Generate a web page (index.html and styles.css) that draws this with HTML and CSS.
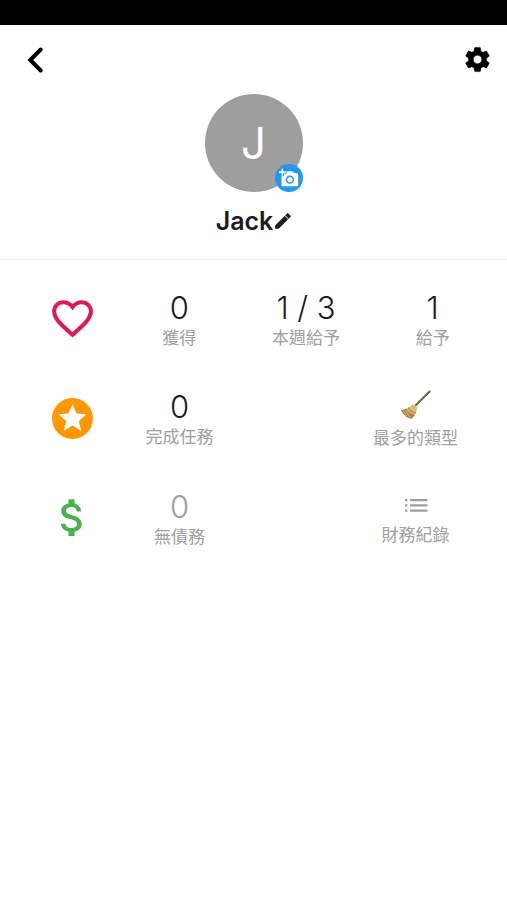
FILE: index.html
```html
<!DOCTYPE html>
<html lang="zh-Hant">
<head>
    <meta charset="UTF-8">
    <title>Jack</title>
    <link rel="stylesheet" href="styles.css">
</head>

<body>

<div class="status-bar"></div>

<div class="toolbar">
    <svg class="back" viewBox="0 0 20 28"><path d="M15.7 3.5L5.300 14l10.400 10.500"/></svg>
    <svg class="gear" viewBox="0 0 24 24"><path d="M19.43 12.98c.04-.32.07-.64.07-.98s-.03-.66-.07-.98l2.11-1.65c.19-.15.24-.42.12-.64l-2-3.46c-.12-.22-.39-.3-.61-.22l-2.49 1c-.52-.4-1.08-.73-1.69-.98l-.38-2.65C14.46 2.18 14.25 2 14 2h-4c-.25 0-.46.18-.49.42l-.38 2.65c-.61.25-1.17.59-1.69.98l-2.49-1c-.23-.09-.49 0-.61.22l-2 3.46c-.13.22-.07.49.12.64l2.11 1.65c-.04.32-.07.65-.07.98s.03.66.07.98l-2.11 1.65c-.19.15-.24.42-.12.64l2 3.46c.12.22.39.3.61.22l2.49-1c.52.4 1.08.73 1.69.98l.38 2.65c.03.24.24.42.49.42h4c.25 0 .46-.18.49-.42l.38-2.65c.61-.25 1.17-.59 1.69-.98l2.49 1c.23.09.49 0 .61-.22l2-3.46c.12-.22.07-.49-.12-.64l-2.11-1.65zM12 15.5c-1.93 0-3.5-1.57-3.5-3.5s1.57-3.5 3.5-3.5 3.5 1.57 3.5 3.5-1.57 3.5-3.5 3.5z"/></svg>
</div>

<div class="profile">
    <div class="avatar">
        <span>J</span>
        <div class="camera">
            <svg viewBox="0 0 24 24"><path d="M3 4V1h2v3h3v2H5v3H3V6H0V4h3zm3 6V7h3V4h7l1.83 2H21c1.1 0 2 .9 2 2v12c0 1.1-.9 2-2 2H5c-1.1 0-2-.9-2-2V10h3zm7 9c2.76 0 5-2.24 5-5s-2.24-5-5-5-5 2.24-5 5 2.24 5 5 5zm-3.2-5c0 1.77 1.43 3.2 3.2 3.2s3.2-1.43 3.2-3.2-1.43-3.2-3.2-3.2-3.2 1.43-3.2 3.2z"/></svg>
        </div>
    </div>
    <div class="name">
        <span>Jack</span>
        <svg viewBox="0 0 24 24"><path d="M3 17.25V21h3.75L17.81 9.94l-3.75-3.75L3 17.25zM20.71 7.04c.39-.39.39-1.02 0-1.41l-2.34-2.34c-.39-.39-1.02-.39-1.41 0l-1.83 1.83 3.75 3.75 1.83-1.83z"/></svg>
    </div>
</div>

<div class="stats">
    <div class="row">
        <svg class="icon heart" viewBox="0 0 24 24"><path d="M12 20C6 14.600 3 12 3 8.500 3 6 5 4 7.500 4 9.300 4 10.900 4.900 12 6.400 13.100 4.900 14.700 4 16.500 4 19 4 21 6 21 8.500 21 12 18 14.600 12 20z"/></svg>
        <div class="stat">
            <div class="value">0</div>
            <div class="label">獲得</div>
        </div>
        <div class="stat">
            <div class="value">1 / 3</div>
            <div class="label">本週給予</div>
        </div>
        <div class="stat">
            <div class="value">1</div>
            <div class="label">給予</div>
        </div>
    </div>

    <div class="row">
        <svg class="icon star" viewBox="0 0 24 24"><path d="M11.99 2C6.47 2 2 6.48 2 12s4.47 10 9.99 10C17.52 22 22 17.52 22 12S17.52 2 11.99 2zm4.24 16L12 15.45 7.77 18l1.12-4.81-3.73-3.23 4.92-.42L12 5l1.92 4.53 4.92.42-3.73 3.23L16.23 18z"/></svg>
        <div class="stat">
            <div class="value">0</div>
            <div class="label">完成任務</div>
        </div>
        <div class="stat wide broom">
            <svg viewBox="0 0 32 32">
                <path class="stick" d="M30.500 1.500L15.500 16.500"/>
                <path class="stick-light" d="M29.600 1.900L15 16.400"/>
                <path class="brush" d="M13 15c2-.8 5.200 2.300 4.500 4.700-.4 4.300-2.700 7.500-5.500 10.100C7 28.800 3 25.500 1.200 21c4.200-.8 8.600-2.500 11.800-6z"/>
                <path class="shade" d="M2.200 23c2 3.500 5.500 6 9.500 6.800 1.400-1.200 2.500-2.500 3.400-4C10 25.500 8 23.500 6 19.500L1.200 21z"/>
                <path class="band" d="M8.500 18c1.500 3 4 5 7.700 5.600M6 19.400c1.600 3.500 4.400 5.700 8.900 6.400"/>
                <path class="straw" d="M3 21.500l4 5M5.500 21l4.500 7M11.500 17.500l2 4"/>
            </svg>
            <div class="label">最多的類型</div>
        </div>
    </div>

    <div class="row muted">
        <svg class="icon dollar" viewBox="0 0 24 24"><path d="M11.8 10.9c-2.27-.59-3-1.2-3-2.15 0-1.09 1.01-1.85 2.7-1.85 1.78 0 2.44.85 2.5 2.1h2.21c-.07-1.72-1.12-3.3-3.21-3.81V3h-3v2.16c-1.94.42-3.5 1.68-3.5 3.61 0 2.31 1.91 3.46 4.7 4.13 2.5.6 3 1.48 3 2.41 0 .69-.49 1.79-2.7 1.79-2.06 0-2.87-.92-2.98-2.1h-2.2c.12 2.19 1.76 3.42 3.68 3.83V21h3v-2.15c1.95-.37 3.5-1.5 3.5-3.55 0-2.84-2.43-3.81-4.7-4.4z"/></svg>
        <div class="stat">
            <div class="value">0</div>
            <div class="label">無債務</div>
        </div>
        <div class="stat wide records">
            <svg viewBox="0 0 24 16"><path d="M1 1h2.400v2.200H1zM6 1h17.500v2.200H6zM1 6.300h2.400v2.200H1zM6 6.300h17.500v2.200H6zM1 11.600h2.400v2.200H1zM6 11.600h17.500v2.200H6z"/></svg>
            <div class="label">財務紀錄</div>
        </div>
    </div>
</div>

</body>
</html>
```
FILE: styles.css
```css
body {
    margin: 0;
    background-color: #ffffff;
    color: #1c1c1c;
    font-family: Inter, "Noto Sans CJK TC", sans-serif;
}

svg {
    display: block;
    flex: none;
}

.status-bar {
    height: 25px;
    background-color: #000000;
}

.toolbar {
    display: flex;
    justify-content: space-between;
    align-items: center;
    height: 69px;
    padding: 0 15px 0 25px;
}

.back {
    width: 20px;
    height: 28px;
    fill: none;
    stroke: #000000;
    stroke-width: 4;
    stroke-linecap: round;
}

.gear {
    width: 29px;
    height: 29px;
    stroke: #000000;
    stroke-width: .4;
}

.profile {
    display: flex;
    flex-direction: column;
    align-items: center;
    height: 165px;
    border-bottom: 1px solid #ececec;
}

.avatar {
    position: relative;
    width: 98px;
    height: 98px;
    border-radius: 50%;
    background-color: #9e9e9e;
    color: #ffffff;
    font-size: 44px;
    font-weight: 400;
    line-height: 98px;
    text-align: center;
}

.camera {
    position: absolute;
    right: 0;
    bottom: 0;
    display: flex;
    align-items: center;
    justify-content: center;
    width: 28px;
    height: 28px;
    border-radius: 50%;
    background-color: #2196f3;
}

.camera svg {
    width: 20px;
    height: 20px;
    fill: #ffffff;
}

.name {
    display: flex;
    align-items: center;
    margin-top: 13px;
    padding-left: 2px;
    font-size: 25px;
    font-weight: 600;
    line-height: 32px;
}

.name svg {
    width: 20px;
    height: 20px;
    fill: #1c1c1c;
    stroke: #1c1c1c;
    stroke-width: .8;
}

.stats {
    padding: 9px 11px 0 48px;
}

.row {
    display: flex;
    align-items: center;
    height: 99.6px;
}

.icon {
    width: 49px;
    height: 49px;
    margin-right: 19px;
}

.heart {
    fill: none;
    stroke: #e0195f;
    stroke-width: 2;
}

.star {
    fill: #ff9800;
}

.dollar {
    fill: #4caf50;
}

.stat {
    display: flex;
    flex-direction: column;
    align-items: center;
    width: 127px;
    padding-top: 3px;
}

.wide {
    width: 161px;
    margin-left: auto;
}

.value {
    font-size: 31px;
    font-weight: 350;
    line-height: 35px;
}

.label {
    margin-top: 1px;
    color: #a0a0a0;
    font-size: 17px;
    line-height: 25px;
}

.muted .value {
    color: #9e9e9e;
}

.broom {
    padding-top: 5px;
}

.broom svg {
    width: 31px;
    height: 31px;
    margin-bottom: 4px;
}

.stick {
    stroke: #5d5548;
    stroke-width: 2;
    stroke-linecap: round;
}

.stick-light {
    stroke: #a29a86;
    stroke-width: .6;
}

.brush {
    fill: #d9bd72;
}

.shade {
    fill: #a8854a;
}

.band {
    fill: none;
    stroke: #b0803f;
    stroke-width: 1.2;
}

.straw {
    fill: none;
    stroke: #e0c98a;
    stroke-width: .8;
}

.records {
    padding-top: 11px;
}

.records svg {
    width: 24px;
    height: 16px;
    margin-bottom: 8px;
    fill: #9e9e9e;
}
```
